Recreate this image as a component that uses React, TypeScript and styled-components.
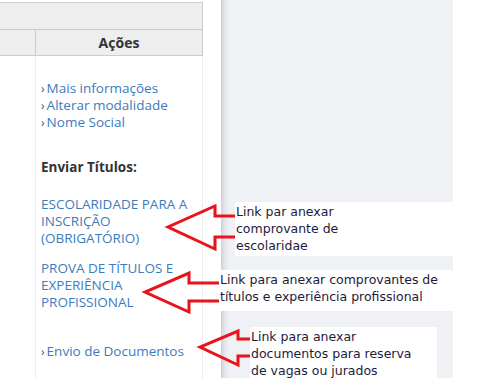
import React from 'react';
import styled, { createGlobalStyle } from 'styled-components';

const GlobalStyle = createGlobalStyle`
  html, body {
    margin: 0;
    padding: 0;
    background: #fff;
  }
  body {
    font-family: "Open Sans", "Liberation Sans", sans-serif;
    overflow: hidden;
  }
`;

const Page = styled.div`
  position: relative;
  display: flex;
  flex-direction: row;
  align-items: flex-start;
  width: 487px;
  height: 390px;
`;

const Table = styled.div`
  width: 203px;
  margin-top: 2px;
  display: flex;
  flex-direction: column;
`;

const HeadRow = styled.div<{ split?: boolean }>`
  display: flex;
  height: 27px;
  background: #eeeeee;
  border-top: 1px solid #cccccc;
  border-right: 1px solid #cccccc;
  box-sizing: border-box;
  ${({ split }) => split && 'border-bottom: 1px solid #cccccc;'}
`;

const HeadCell = styled.div<{ width?: number }>`
  ${({ width }) => (width ? `width: ${width}px;` : 'flex: 1;')}
  display: flex;
  align-items: center;
  justify-content: center;
  font-size: 14px;
  font-weight: 700;
  color: #333;
  & + & {
    border-left: 1px solid #cccccc;
  }
`;

const Body = styled.div`
  display: flex;
  height: 323px;
  border-right: 1px solid #eeeeee;
`;

const BlankCol = styled.div`
  width: 35px;
  border-right: 1px solid #eeeeee;
`;

const Actions = styled.div`
  flex: 1;
  padding: 24px 0 0 5px;
  font-size: 13.5px;
  line-height: 17px;
`;

const LinkList = styled.div`
  display: flex;
  flex-direction: column;
`;

const Link = styled.a<{ gap?: number }>`
  display: block;
  color: #3d7bbd;
  text-decoration: none;
  margin-top: ${({ gap }) => gap || 0}px;
`;

const Chevron = styled.span`
  color: #555;
  font-size: 12px;
  margin-right: 2px;
`;

const SectionTitle = styled.div`
  margin-top: 28px;
  font-weight: 700;
  color: #333;
`;

const Spacer = styled.div`
  width: 18px;
`;

const Panel = styled.div`
  width: 232px;
  height: 378px;
  background: linear-gradient(to right, #cfcfd5 0px, #e6e7ec 4px, #f0f1f5 8px, #f0f1f5 100%);
`;

const Note = styled.div<{ left: number; top: number; width: number; height: number }>`
  position: absolute;
  left: ${({ left }) => left}px;
  top: ${({ top }) => top}px;
  width: ${({ width }) => width}px;
  height: ${({ height }) => height}px;
  box-sizing: border-box;
  padding: 1px 0 0 1px;
  background: #fff;
  font-family: "DejaVu Sans", "Liberation Sans", sans-serif;
  font-size: 12.5px;
  line-height: 17px;
  color: #1e1a3a;
  white-space: nowrap;
`;

const Arrows = styled.svg`
  position: absolute;
  left: 0;
  top: 0;
  pointer-events: none;
`;

const arrowPaths = [
  '237,216 215,216 215,206 168,227 215,249 215,237 237,237',
  '221,283 189,283 189,273 145,292 189,312 189,301 221,301',
  '252,339 238,339 238,331 200,347 238,365 238,356 252,356',
];

export default function App() {
  return (
    <Page>
      <GlobalStyle />
      <Table>
        <HeadRow />
        <HeadRow split>
          <HeadCell width={35} />
          <HeadCell>Ações</HeadCell>
        </HeadRow>
        <Body>
          <BlankCol />
          <Actions>
            <LinkList>
              <Link href="#"><Chevron>›</Chevron>Mais informações</Link>
              <Link href="#"><Chevron>›</Chevron>Alterar modalidade</Link>
              <Link href="#"><Chevron>›</Chevron>Nome Social</Link>
            </LinkList>
            <SectionTitle>Enviar Títulos:</SectionTitle>
            <Link href="#" gap={20}>
              ESCOLARIDADE PARA A<br />INSCRIÇÃO<br />(OBRIGATÓRIO)
            </Link>
            <Link href="#" gap={13}>
              PROVA DE TÍTULOS E<br />EXPERIÊNCIA<br />PROFISSIONAL
            </Link>
            <Link href="#" gap={32}><Chevron>›</Chevron>Envio de Documentos</Link>
          </Actions>
        </Body>
      </Table>
      <Spacer />
      <Panel />

      <Arrows width={487} height={390}>
        {arrowPaths.map(p => (
          <polyline key={p} points={p} fill="none" stroke="#e8131b" strokeWidth={3} strokeLinejoin="miter" />
        ))}
      </Arrows>

      <Note left={235} top={202} width={218} height={54}>
        Link par anexar<br />comprovante de<br />escolaridae
      </Note>
      <Note left={219} top={270} width={234} height={41}>
        Link para anexar comprovantes de<br />títulos e experiência profissional
      </Note>
      <Note left={250} top={327} width={187} height={63}>
        Link para anexar<br />documentos para reserva<br />de vagas ou jurados
      </Note>
    </Page>
  );
}
